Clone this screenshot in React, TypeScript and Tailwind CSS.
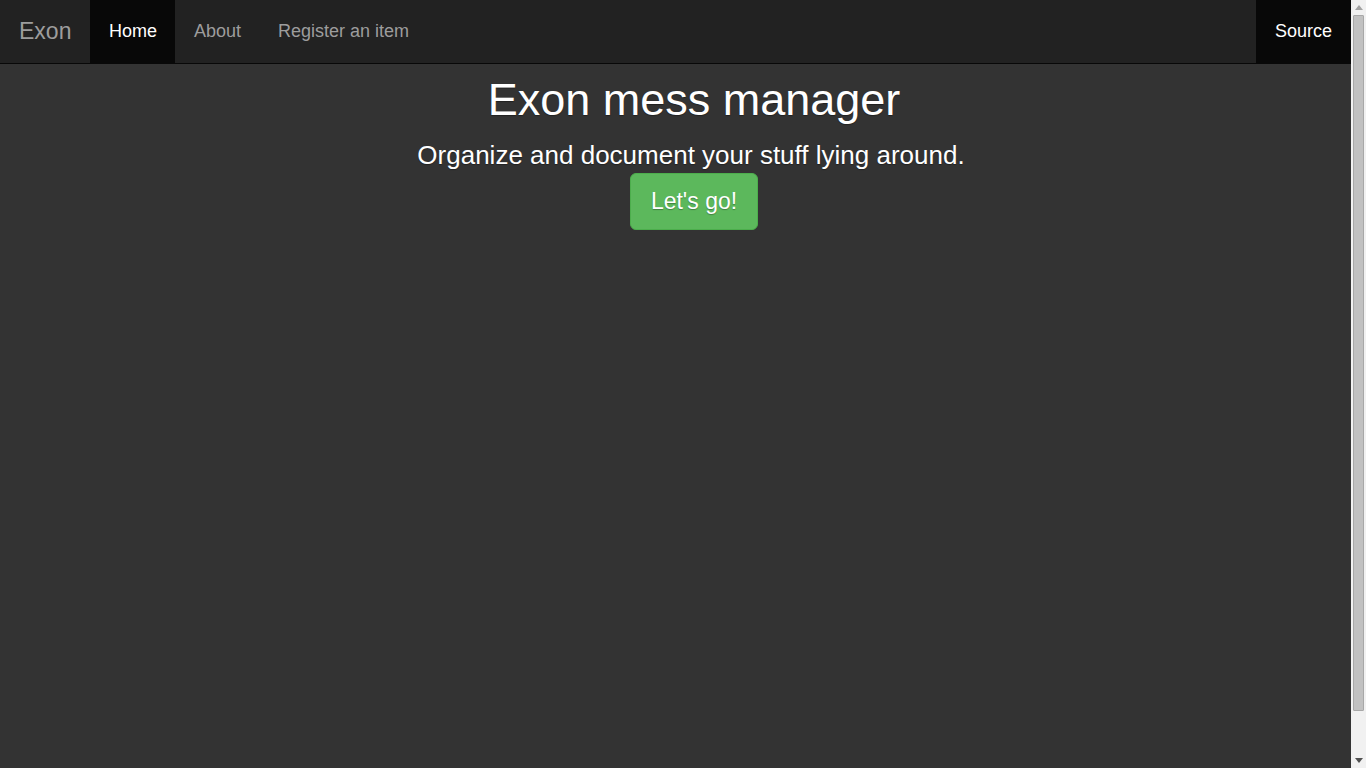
import React from "react";

function FakeScrollbar() {
  return (
    <div className="flex h-[768px] w-[15px] shrink-0 flex-col items-center bg-[#f1f1f1]">
      <div className="flex h-[15px] w-full items-center justify-center">
        <svg width="8" height="5" viewBox="0 0 8 5">
          <polygon points="4,0 8,5 0,5" fill="#a3a3a3" />
        </svg>
      </div>
      <div className="h-[696px] w-[11px] rounded-[1px] border border-[#a8a8a8] bg-[#c1c1c1]" />
      <div className="flex-1" />
      <div className="flex h-[15px] w-full items-center justify-center">
        <svg width="8" height="5" viewBox="0 0 8 5">
          <polygon points="0,0 8,0 4,5" fill="#505050" />
        </svg>
      </div>
    </div>
  );
}

export default function App() {
  const font = { fontFamily: '"Liberation Sans", Arial, sans-serif' };
  return (
    <div className="flex h-[768px] overflow-hidden bg-[#333333] text-white" style={font}>
      <div className="min-w-0 flex-1">
        <nav className="flex h-[64px] items-stretch border-b border-[#080808] bg-[#222222]">
          <a className="flex items-center px-[19px] text-[23px] text-[#9d9d9d]">Exon</a>
          <a className="flex items-center bg-[#080808] px-[18.5px] text-[18px] text-white">Home</a>
          <a className="flex items-center px-[18.5px] text-[18px] text-[#9d9d9d]">About</a>
          <a className="flex items-center px-[18.5px] text-[18px] text-[#9d9d9d]">Register an item</a>
          <div className="flex-1" />
          <a className="flex items-center bg-[#080808] px-[19px] text-[18px] text-white">Source</a>
        </nav>
        <main className="flex flex-col items-center pl-[37px]">
          <h1 className="mt-[11px] text-[45px] leading-[1.1] text-white [text-shadow:0_1px_1px_rgba(0,0,0,0.35)]">
            Exon mess manager
          </h1>
          <p className="mt-[16px] pr-[6px] text-[26px] leading-[1.1] text-white [text-shadow:0_1px_1px_rgba(0,0,0,0.35)]">
            Organize and document your stuff lying around.
          </p>
          <button className="mt-[4px] h-[57px] rounded-[6px] border border-[#4cae4c] bg-[#5cb85c] px-[20px] text-[23px] text-white [text-shadow:0_1px_1px_rgba(0,0,0,0.3)]">
            Let's go!
          </button>
        </main>
      </div>
      <FakeScrollbar />
    </div>
  );
}
